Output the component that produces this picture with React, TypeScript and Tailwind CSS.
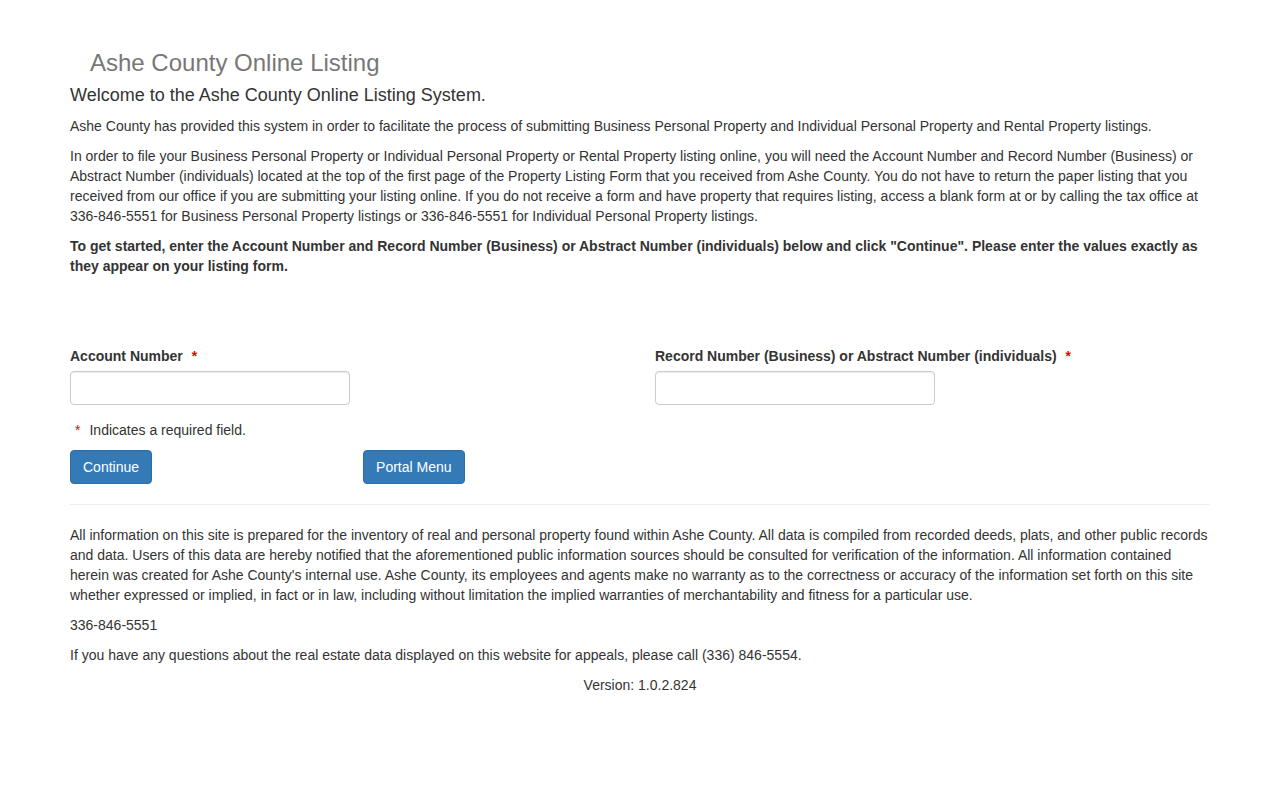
export default function App() {
  return (
    <div className="min-h-screen w-full bg-white text-[14px] leading-[20px] text-[#333]" style={{ fontFamily: '"Liberation Sans", Arial, sans-serif' }}>
      <div className="mx-auto w-[1170px] px-[15px] pt-[50px]">
        <div className="pl-[20px] text-[24px] leading-[26px] text-[#777]">Ashe County Online Listing</div>
        <div className="mt-[9px] text-[18px] leading-[20px]">Welcome to the Ashe County Online Listing System.</div>
        <p className="mt-[11px]">
          Ashe County has provided this system in order to facilitate the process of submitting Business Personal Property and Individual Personal Property and Rental Property listings.
        </p>
        <p className="mt-[10px]">
          In order to file your Business Personal Property or Individual Personal Property or Rental Property listing online, you will need the Account Number and Record Number (Business) or Abstract Number (individuals) located at the top of the first page of the Property Listing Form that you received from Ashe County. You do not have to return the paper listing that you received from our office if you are submitting your listing online. If you do not receive a form and have property that requires listing, access a blank form at or by calling the tax office at 336-846-5551 for Business Personal Property listings or 336-846-5551 for Individual Personal Property listings.
        </p>
        <p className="mt-[10px] font-bold">
          To get started, enter the Account Number and Record Number (Business) or Abstract Number (individuals) below and click "Continue". Please enter the values exactly as they appear on your listing form.
        </p>

        <div className="mt-[70px] grid grid-cols-2 gap-[30px]">
          <div>
            <label className="block font-bold">
              Account Number <span className="ml-[5px] text-[#e00]">*</span>
            </label>
            <input type="text" className="mt-[5px] h-[34px] w-[280px] rounded-[4px] border border-[#ccc] px-3 shadow-[inset_0_1px_1px_rgba(0,0,0,0.075)] outline-none" />
          </div>
          <div>
            <label className="block font-bold">
              Record Number (Business) or Abstract Number (individuals) <span className="ml-[5px] text-[#e00]">*</span>
            </label>
            <input type="text" className="mt-[5px] h-[34px] w-[280px] rounded-[4px] border border-[#ccc] px-3 shadow-[inset_0_1px_1px_rgba(0,0,0,0.075)] outline-none" />
          </div>
        </div>

        <div className="mt-[15px] pl-[5px]">
          <span className="text-[#e00]">*</span>
          <span className="ml-[9px]">Indicates a required field.</span>
        </div>

        <div className="mt-[10px] flex">
          <button type="button" className="h-[34px] rounded-[4px] border border-[#2e6da4] bg-[#337ab7] px-[12px] text-[14px] text-white">
            Continue
          </button>
          <button type="button" className="ml-[211px] h-[34px] rounded-[4px] border border-[#2e6da4] bg-[#337ab7] px-[12px] text-[14px] text-white">
            Portal Menu
          </button>
        </div>

        <hr className="mt-[20px] border-0 border-t border-[#eee]" />

        <p className="mt-[20px]">
          All information on this site is prepared for the inventory of real and personal property found within Ashe County. All data is compiled from recorded deeds, plats, and other public records and data. Users of this data are hereby notified that the aforementioned public information sources should be consulted for verification of the information. All information contained herein was created for Ashe County's internal use. Ashe County, its employees and agents make no warranty as to the correctness or accuracy of the information set forth on this site whether expressed or implied, in fact or in law, including without limitation the implied warranties of merchantability and fitness for a particular use.
        </p>
        <p className="mt-[10px]">336-846-5551</p>
        <p className="mt-[10px]">If you have any questions about the real estate data displayed on this website for appeals, please call (336) 846-5554.</p>
        <p className="mt-[10px] text-center">Version: 1.0.2.824</p>
      </div>
    </div>
  );
}
